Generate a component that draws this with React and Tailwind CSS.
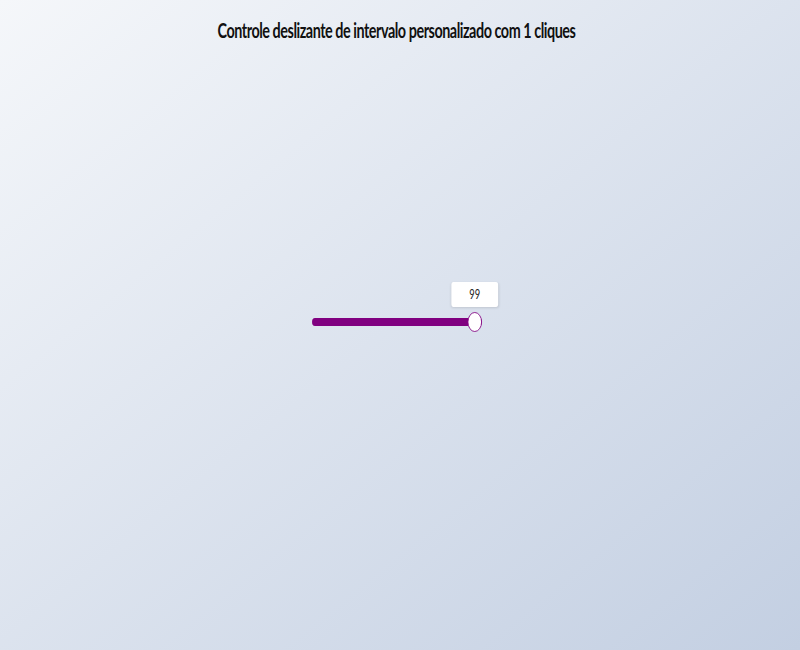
export default function App() {
  const value = 99;
  return (
    <div
      className="flex h-[650px] w-full flex-col items-center bg-gradient-to-br from-[#f5f7fa] to-[#c3cfe2] pr-[7px] font-['Lato','Liberation_Sans',sans-serif]"
    >
      <h1 className="mt-[16px] scale-x-[0.72] text-[20px] leading-[28px] font-bold tracking-[-0.65px] whitespace-nowrap text-[#111]">
        Controle deslizante de intervalo personalizado com 1 cliques
      </h1>
      <div className="mt-[238px] flex scale-x-[0.72] flex-col items-start">
        <div className="relative h-[25px] w-[236px]">
          <div className="absolute top-0 left-[226px] flex h-[25px] w-[65px] -translate-x-1/2 items-center justify-center rounded-[3px] bg-white text-[13px] text-[#222] shadow-[0_1px_3px_rgba(0,0,0,0.12)]">
            {value}
          </div>
        </div>
        <div className="relative mt-[11px] h-[8px] w-[236px] rounded-full bg-[#800080]">
          <div className="absolute top-1/2 left-[226px] h-[20px] w-[20px] -translate-x-1/2 -translate-y-1/2 rounded-full border border-[#800080] bg-white" />
        </div>
      </div>
    </div>
  );
}
